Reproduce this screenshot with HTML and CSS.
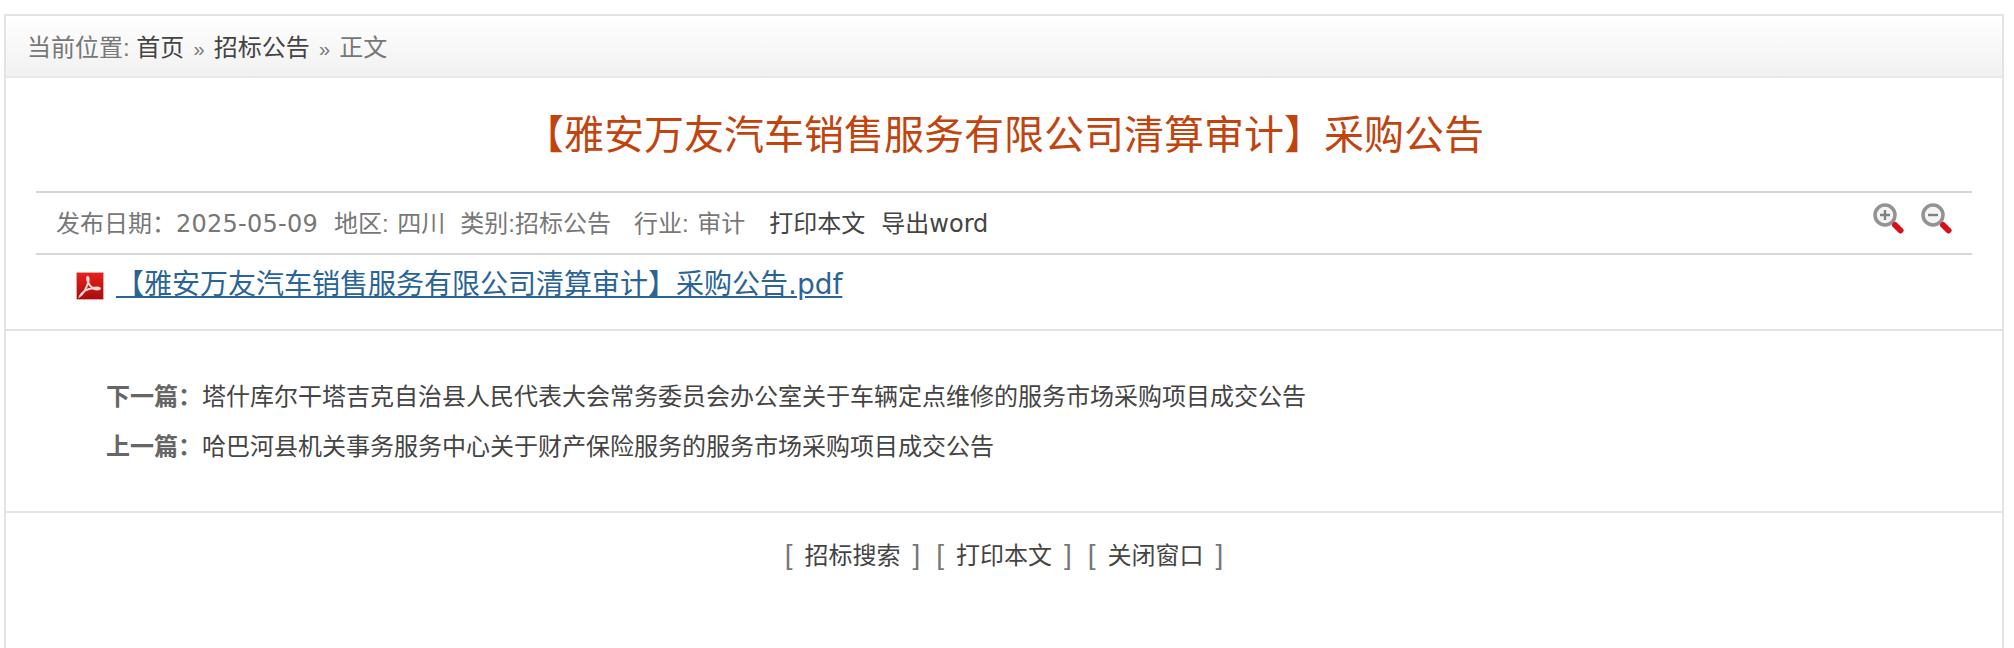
FILE: index.html
```html
<!DOCTYPE html>
<html lang="zh-CN">
<head>
<meta charset="utf-8">
<title>【雅安万友汽车销售服务有限公司清算审计】采购公告</title>
<link rel="stylesheet" href="styles.css">
</head>
<body>
<div class="frame">
  <div class="crumbs">当前位置: <a href="#">首页</a> <span class="sep">»</span> <a href="#">招标公告</a> <span class="sep">»</span> 正文</div>
  <div class="article">
    <h1 class="title">【雅安万友汽车销售服务有限公司清算审计】采购公告</h1>
    <div class="meta">
      <div class="meta-text">
        <span class="m-date">发布日期：<span class="m-num">2025-05-09</span></span>
        <span class="m-area">地区: 四川</span>
        <span class="m-cat">类别:招标公告</span>
        <span class="m-ind">行业: 审计</span>
        <a class="m-print" href="#">打印本文</a>
        <a class="m-word" href="#">导出word</a>
      </div>
      <div class="zooms">
        <svg class="zoom" viewBox="0 0 32 32" width="32" height="32" aria-hidden="true">
          <circle cx="13" cy="13" r="10" fill="#f4f4f4" stroke="#939393" stroke-width="3.500"/>
          <path d="M8 13h10M13 8v10" stroke="#808080" stroke-width="2.400" fill="none"/>
          <path d="M23 23l5.500 5.500" stroke="#d8101c" stroke-width="6" stroke-linecap="round"/>
        </svg>
        <svg class="zoom" viewBox="0 0 32 32" width="32" height="32" aria-hidden="true">
          <circle cx="13" cy="13" r="10" fill="#f4f4f4" stroke="#939393" stroke-width="3.500"/>
          <path d="M8 13h10" stroke="#808080" stroke-width="2.400" fill="none"/>
          <path d="M23 23l5.500 5.500" stroke="#d8101c" stroke-width="6" stroke-linecap="round"/>
        </svg>
      </div>
    </div>
    <div class="attach">
      <svg class="pdf" viewBox="0 0 28 28" width="28" height="28" aria-hidden="true">
        <defs>
          <linearGradient id="pdfbg" x1="0" y1="0" x2="0" y2="1">
            <stop offset="0" stop-color="#e8211c"/>
            <stop offset="1" stop-color="#a80c0c"/>
          </linearGradient>
        </defs>
        <rect x="0.5" y="0.5" width="27" height="27" rx="1" fill="url(#pdfbg)" stroke="#e3a5a5"/>
        <path d="M4 24c3-2 6-7 8-13 .6-2 .8-5 0-6-1-.6-1.400 2 0 5 2 4.500 5 7.500 9 7.500 2 0 3.500-.5 2.500-1.500-1.500-1-9-.5-15 3-2 1.500-4 3.500-4.500 5z" fill="none" stroke="#f3d7d7" stroke-width="2"/>
      </svg>
      <a class="attach-link" href="#">【雅安万友汽车销售服务有限公司清算审计】采购公告.pdf</a>
    </div>
  </div>
  <div class="pager">
    <div class="pager-row"><span class="pager-label">下一篇：</span><a href="#">塔什库尔干塔吉克自治县人民代表大会常务委员会办公室关于车辆定点维修的服务市场采购项目成交公告</a></div>
    <div class="pager-row"><span class="pager-label">上一篇：</span><a href="#">哈巴河县机关事务服务中心关于财产保险服务的服务市场采购项目成交公告</a></div>
  </div>
  <div class="tools">
    <div class="tool"><span class="br">[</span><a href="#">招标搜索</a><span class="br">]</span></div>
    <div class="tool"><span class="br">[</span><a href="#">打印本文</a><span class="br">]</span></div>
    <div class="tool"><span class="br">[</span><a href="#">关闭窗口</a><span class="br">]</span></div>
  </div>
</div>
</body>
</html>
```
FILE: styles.css
```css
* { box-sizing: border-box; }
html, body { margin: 0; padding: 0; background: #fff; }
body {
  padding: 14px 10px 0 4px;
  height: 648px;
  overflow: hidden;
  font-family: "Liberation Sans", "Noto Sans CJK SC", sans-serif;
  font-size: 24px;
  color: #777;
}
a { color: #444; text-decoration: none; }
.frame {
  height: 634px;
  border: 2px solid #e3e3e3;
  border-bottom: 0;
}
.crumbs {
  height: 62px;
  padding: 0 21px;
  line-height: 63px;
  background: linear-gradient(#fff, #f1f1f1);
  border-bottom: 2px solid #e8e8e8;
}
.sep { font-size: 20px; margin: 0 2.500px; }
.article { padding: 0 30px; border-bottom: 2px solid #e3e3e3; height: 253px; }
.title {
  margin: 0;
  height: 113px;
  line-height: 114px;
  font-size: 40px;
  font-weight: normal;
  text-align: center;
  color: #c1440e;
}
.meta {
  height: 64px;
  display: flex;
  justify-content: space-between;
  align-items: center;
  padding: 0 20px;
  border-top: 2px solid #d6d6d6;
  border-bottom: 2px solid #d6d6d6;
}
.meta-text { display: flex; align-items: center; margin-top: -4px; }
.m-date { font-family: "DejaVu Sans", "Noto Sans CJK SC", sans-serif; }
.m-num { letter-spacing: 0.25px; }
.m-area { margin-left: 16px; word-spacing: 2px; }
.m-cat { margin-left: 15px; }
.m-ind { margin-left: 23px; word-spacing: 2px; }
.m-print { margin-left: 24px; }
.m-word { margin-left: 16px; font-family: "DejaVu Sans", "Noto Sans CJK SC", sans-serif; }
.zooms { display: flex; gap: 16px; margin-top: -10px; }
.attach {
  display: flex;
  align-items: center;
  gap: 12px;
  padding: 12px 0 0 40px;
  font-size: 28px;
  line-height: 36px;
}
.pdf { margin-top: 2px; }
.attach-link {
  font-family: "DejaVu Sans", "Noto Sans CJK SC", sans-serif;
  color: #2a6496;
  text-decoration: underline;
}
.pager { height: 182px; padding-top: 41px; border-bottom: 2px solid #e3e3e3; }
.pager-row { height: 50px; line-height: 50px; padding-left: 100px; }
.pager-label { font-weight: bold; color: #666; }
.tools {
  display: flex;
  justify-content: center;
  gap: 16px;
  padding-top: 24px;
  line-height: 36px;
}
.tool { display: flex; align-items: baseline; gap: 12px; }
.br { font-size: 28px; }
```
